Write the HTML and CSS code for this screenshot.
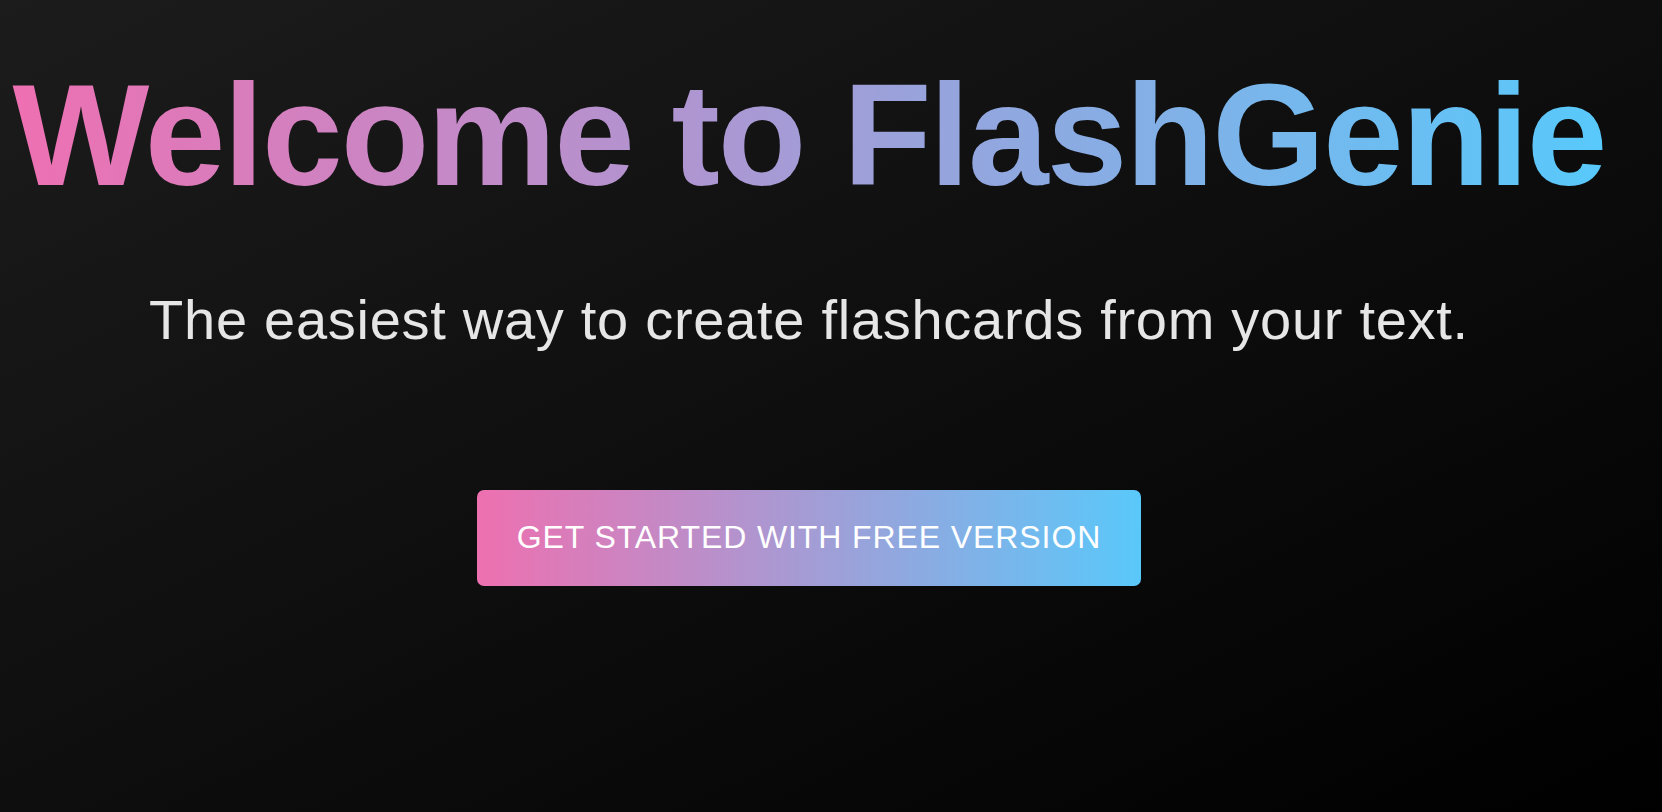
FILE: index.html
```html
<!DOCTYPE html>
<html lang="en">
<head>
<meta charset="utf-8">
<title>FlashGenie</title>
<link rel="stylesheet" href="styles.css">
</head>
<body>
<main class="hero">
  <h1 class="hero-title">Welcome to FlashGenie</h1>
  <p class="hero-subtitle">The easiest way to create flashcards from your text.</p>
  <button class="hero-button" type="button">GET STARTED WITH FREE VERSION</button>
</main>
</body>
</html>
```
FILE: styles.css
```css
html, body {
  margin: 0;
  padding: 0;
  height: 100%;
}

body {
  background: linear-gradient(to bottom right, #1c1c1c, #000000);
  font-family: "Liberation Sans", Arial, Helvetica, sans-serif;
  overflow: hidden;
}

.hero {
  box-sizing: border-box;
  height: 100%;
  width: 1618px;
  display: flex;
  flex-direction: column;
  align-items: center;
  padding-top: 63px;
}

.hero-title {
  margin: 0;
  font-size: 145px;
  line-height: 1;
  font-weight: 700;
  letter-spacing: -1.9px;
  white-space: nowrap;
  background: linear-gradient(to right, #ee70b2, #58c9fb);
  -webkit-background-clip: text;
  background-clip: text;
  color: transparent;
}

.hero-subtitle {
  margin: 84px 0 0;
  font-size: 56px;
  line-height: 1;
  letter-spacing: 0.72px;
  color: #e6e6e6;
  white-space: nowrap;
}

.hero-button {
  margin-top: 142px;
  padding: 31px 40px 33px;
  border: none;
  border-radius: 7px;
  background: linear-gradient(to right, #ee70b0, #5ac8fa);
  color: #ffffff;
  font-family: "Liberation Sans", Arial, Helvetica, sans-serif;
  font-size: 32px;
  line-height: 1;
  letter-spacing: 0.9px;
  cursor: pointer;
  white-space: nowrap;
}
```
